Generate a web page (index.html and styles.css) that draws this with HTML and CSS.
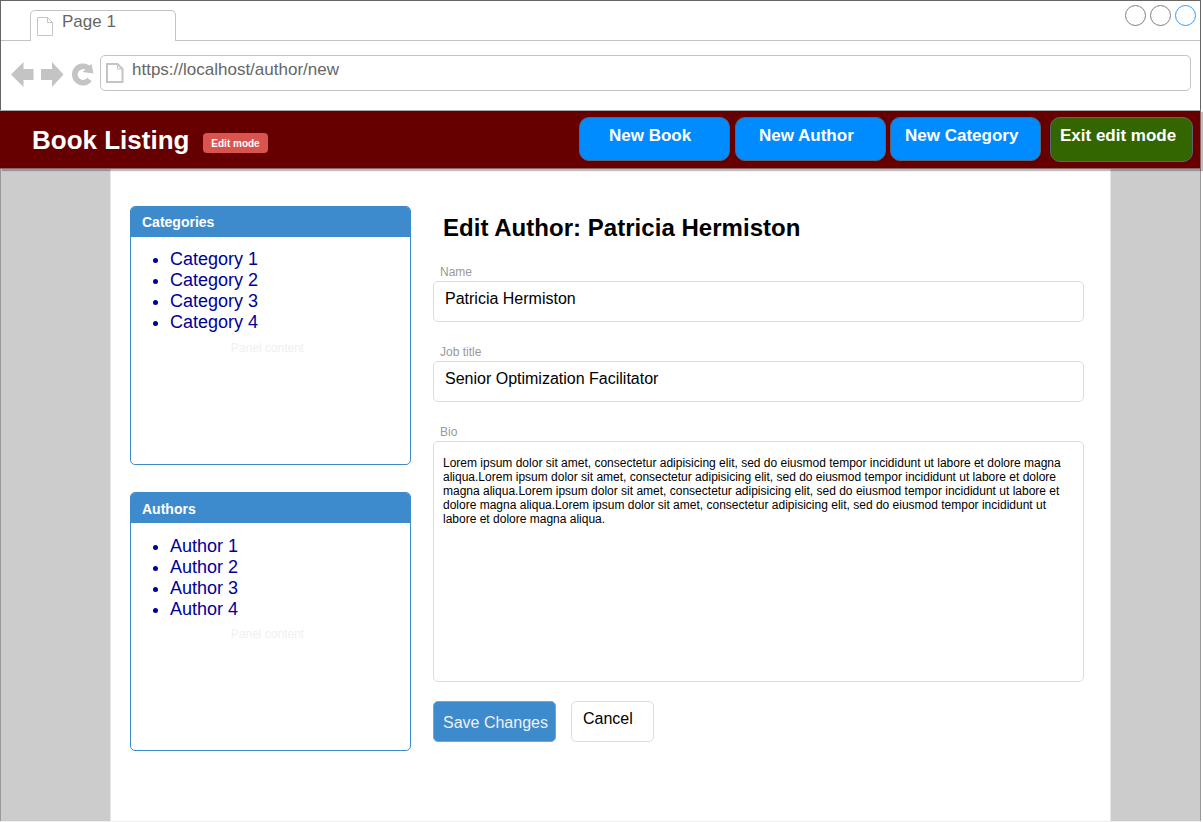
FILE: index.html
```html
<!DOCTYPE html>
<html lang="en">
<head>
<meta charset="utf-8">
<title>Book Listing</title>
<link rel="stylesheet" href="styles.css">
</head>
<body>
<div class="window">
  <div class="tabs">
    <div class="tab-gap"></div>
    <div class="tab">
      <svg class="tab-icon" width="18" height="21" viewBox="0 0 18 21"><path d="M1.5 1.5H11.5L16.5 6.500V19.500H1.500ZM11.500 1.500V6.500H16.500" fill="#fff" stroke="#c4c4c4"/></svg>
      <span>Page 1</span>
    </div>
    <div class="tab-rest">
      <svg width="74" height="24" viewBox="0 0 74 24" fill="#fff"><circle cx="12.500" cy="12.500" r="10" stroke="#808080"/><circle cx="37.500" cy="12.500" r="10" stroke="#808080"/><circle cx="62.500" cy="12.500" r="10" stroke="#3399ff"/></svg>
    </div>
  </div>
  <div class="toolbar">
    <svg class="nav-icons" width="88" height="36" viewBox="0 0 88 36" fill="#c4c4c4">
      <path d="M0 19.500L12.500 7V14H22.500V25H12.500V32Z"/>
      <path d="M52.500 19.500L41 7V14H30V25H41V32Z"/>
      <path d="M78.500 24.500A8.200 8.200 0 1 1 77 13" fill="none" stroke="#c4c4c4" stroke-width="5.600"/>
      <path d="M71.500 17L76.500 12.500L80.500 8.800L82.500 18.500Z"/>
    </svg>
    <div class="address">
      <svg width="20" height="22" viewBox="0 0 20 22"><path d="M2 2H12.500L17.500 7V20H2Z" fill="#fff" stroke="#c4c4c4" stroke-width="2"/><path d="M12.500 2V7H17.500" fill="none" stroke="#c4c4c4"/></svg>
      <span>https://localhost/author/new</span>
    </div>
  </div>
  <header class="header">
    <h1 class="brand">Book Listing</h1>
    <span class="badge">Edit mode</span>
    <nav class="actions">
      <a class="action book">New Book</a>
      <a class="action author">New Author</a>
      <a class="action category">New Category</a>
      <a class="action exit">Exit edit mode</a>
    </nav>
  </header>
  <div class="page">
    <main class="content">
      <aside class="sidebar">
        <section class="panel">
          <h2 class="panel-title">Categories</h2>
          <ul class="links">
            <li>Category 1</li>
            <li>Category 2</li>
            <li>Category 3</li>
            <li>Category 4</li>
          </ul>
          <p class="panel-note">Panel content</p>
        </section>
        <section class="panel authors">
          <h2 class="panel-title">Authors</h2>
          <ul class="links">
            <li>Author 1</li>
            <li>Author 2</li>
            <li>Author 3</li>
            <li>Author 4</li>
          </ul>
          <p class="panel-note">Panel content</p>
        </section>
      </aside>
      <div class="form">
        <h2 class="form-title">Edit Author: Patricia Hermiston</h2>
        <div class="label">Name</div>
        <div class="field">Patricia Hermiston</div>
        <div class="label">Job title</div>
        <div class="field">Senior Optimization Facilitator</div>
        <div class="label">Bio</div>
        <div class="field bio">Lorem ipsum dolor sit amet, consectetur adipisicing elit, sed do eiusmod tempor incididunt ut labore et dolore magna<br>aliqua.Lorem ipsum dolor sit amet, consectetur adipisicing elit, sed do eiusmod tempor incididunt ut labore et dolore<br>magna aliqua.Lorem ipsum dolor sit amet, consectetur adipisicing elit, sed do eiusmod tempor incididunt ut labore et<br>dolore magna aliqua.Lorem ipsum dolor sit amet, consectetur adipisicing elit, sed do eiusmod tempor incididunt ut<br>labore et dolore magna aliqua.</div>
        <div class="buttons">
          <div class="save">Save Changes</div>
          <div class="cancel">Cancel</div>
        </div>
      </div>
    </main>
  </div>
</div>
</body>
</html>
```
FILE: styles.css
```css
* {
  box-sizing: border-box;
}

body {
  margin: 0;
  background: #fff;
  font-family: "Liberation Sans", Arial, sans-serif;
  overflow: hidden;
}

h1, h2, p, ul {
  margin: 0;
  padding: 0;
}

.window {
  width: 1201px;
  height: 822px;
  border-top: 1px solid #666;
  border-bottom: 1px solid #eee;
  display: flex;
  flex-direction: column;
}

/* Browser chrome */
.tabs,
.toolbar {
  border: 1px solid #666;
  border-width: 0 1px;
}

.tabs {
  display: flex;
  height: 40px;
}

.tab-gap {
  width: 29px;
  border-bottom: 1px solid #c4c4c4;
}

.tab {
  display: flex;
  gap: 8px;
  width: 146px;
  height: 31px;
  margin-top: 9px;
  padding-left: 5px;
  border: 1px solid #c4c4c4;
  border-bottom: 0;
  border-radius: 5px 5px 0 0;
  color: #666;
  font-size: 17px;
  line-height: 22px;
}

.tab-icon {
  margin-top: 5px;
}

.tab-rest {
  flex: 1;
  display: flex;
  justify-content: flex-end;
  padding: 2px 3px 0 0;
  border-bottom: 1px solid #c4c4c4;
}

.toolbar {
  display: flex;
  gap: 1px;
  height: 69px;
  flex-shrink: 0;
  padding: 14px 9px 0 10px;
}

.address {
  display: flex;
  gap: 7px;
  flex: 1;
  height: 36px;
  padding-left: 4px;
  border: 1px solid #c4c4c4;
  border-radius: 5px;
  color: #666;
  font-size: 17px;
  line-height: 27px;
}

.address svg {
  margin-top: 6px;
}

/* Application header */
.header {
  position: relative;
  display: flex;
  height: 59px;
  flex-shrink: 0;
  padding-left: 32px;
  background: #600;
  border: 1px solid #8a6666;
  border-width: 1px 1px 1px 0;
  border-top-color: #aaa;
  box-shadow: 2px 2px 1px rgba(0, 0, 0, 0.25);
}

.brand {
  width: 171px;
  color: #fff;
  font-size: 26px;
  line-height: 58px;
}

.badge {
  width: 65px;
  height: 20px;
  margin-top: 22px;
  border-radius: 4px;
  background: #d9534f;
  color: #fff;
  font-size: 10px;
  font-weight: bold;
  line-height: 21px;
  text-align: center;
}

.actions {
  display: flex;
  gap: 5px;
  margin: 6px 7px 0 auto;
}

.action {
  width: 151px;
  height: 44px;
  border: 1px solid #5a6675;
  border-radius: 10px;
  background: #008cff;
  color: #fff;
  font-size: 17px;
  font-weight: bold;
  line-height: 35px;
  white-space: nowrap;
}

.book {
  padding-left: 29px;
}

.author {
  padding-left: 23px;
}

.category {
  margin-left: -1px;
  padding-left: 14px;
}

.exit {
  width: 143px;
  height: 45px;
  margin-left: 4px;
  padding-left: 9px;
  background: #360;
}

/* Page body */
.page {
  flex: 1;
  padding: 0 89px 0 109px;
  border: 1px solid #999;
  border-width: 0 1px;
  background: #ccc;
}

.content {
  display: flex;
  gap: 22px;
  height: 100%;
  padding: 37px 26px 0 19px;
  border: 1px solid #e6e6e6;
  border-width: 0 1px;
  background: #fff;
}

.sidebar {
  display: flex;
  flex-direction: column;
  gap: 27px;
}

.panel {
  width: 281px;
  height: 259px;
  border: 1px solid #3d8bcd;
  border-radius: 5px;
  overflow: hidden;
}

.panel-title {
  height: 30px;
  padding-left: 11px;
  background: #3d8bcd;
  color: #fff;
  font-size: 14px;
  line-height: 30px;
}

.authors .panel-title {
  line-height: 32px;
}

.links {
  padding: 12px 0 0 39px;
  color: #009;
  font-size: 18px;
  line-height: 21px;
}

.authors .links {
  padding-top: 13px;
}

.panel-note {
  margin-top: 8px;
  padding-right: 6px;
  color: #f0f0f0;
  font-size: 12px;
  line-height: 14px;
  text-align: center;
}

.authors .panel-note {
  margin-top: 7px;
}

.form {
  width: 651px;
}

.form-title {
  height: 58px;
  padding: 8px 0 0 10px;
  font-size: 24px;
  line-height: 28px;
  letter-spacing: 0.03px;
}

.label {
  height: 17px;
  padding-left: 7px;
  color: #999;
  font-size: 12px;
  line-height: 16px;
}

.field {
  height: 41px;
  margin-bottom: 22px;
  padding: 7px 0 0 11px;
  border: 1px solid #ddd;
  border-radius: 5px;
  font-size: 16px;
  line-height: 20px;
}

.bio {
  height: 241px;
  margin-bottom: 19px;
  padding: 14px 0 0 9px;
  font-size: 12px;
  line-height: 14px;
  white-space: nowrap;
}

.buttons {
  display: flex;
  gap: 15px;
}

.save {
  width: 123px;
  height: 41px;
  padding-left: 9px;
  border: 1px solid #6aa8da;
  border-radius: 5px;
  background: #3d8bcd;
  color: #f0f0f0;
  font-size: 16px;
  line-height: 41px;
}

.cancel {
  width: 83px;
  height: 41px;
  padding-left: 11px;
  border: 1px solid #ddd;
  border-radius: 5px;
  font-size: 16px;
  line-height: 33px;
}
```
